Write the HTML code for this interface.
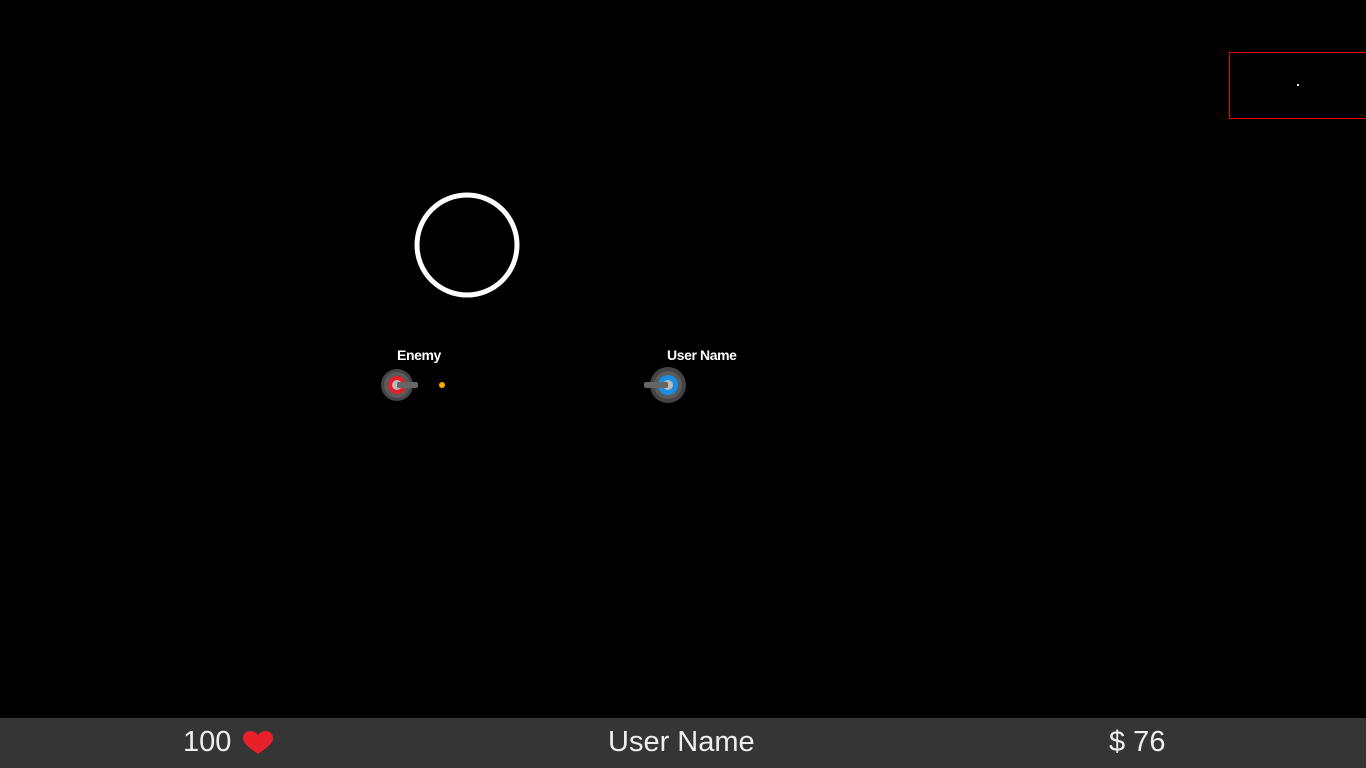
<!DOCTYPE html>
<html><head><style>
html,body{margin:0;width:1366px;height:768px;background:#000;overflow:hidden;font-family:"Liberation Sans",Arial,sans-serif}
.bar{position:absolute;left:0;top:718px;width:1366px;height:50px;background:#353535;color:#eee;font-size:29px}
.bar span{position:absolute;top:8px}
.lbl{position:absolute;color:#fff;font-size:14px;font-weight:bold;letter-spacing:-0.4px}
</style></head><body>
<div style="position:absolute;left:1229px;top:52px;width:140px;height:65px;border:1px solid #e00"></div>
<div style="position:absolute;left:1297px;top:84px;width:2px;height:2px;background:#fdd"></div>
<svg width="1366" height="718" style="position:absolute;left:0;top:0">
<circle cx="467" cy="245" r="50" fill="none" stroke="#fff" stroke-width="5"/>
<circle cx="397" cy="385" r="16" fill="#444"/>
<circle cx="397" cy="385" r="13" fill="#5a5a5a"/>
<circle cx="397" cy="385" r="9" fill="#e2202a"/>
<circle cx="397" cy="385" r="5" fill="#bbb"/>
<rect x="397" y="382" width="21" height="6" rx="2" fill="#666"/>
<circle cx="442" cy="385" r="3" fill="#fa0"/>
<circle cx="668" cy="385" r="18" fill="#444"/>
<circle cx="668" cy="385" r="14" fill="#5a5a5a"/>
<circle cx="668" cy="385" r="10" fill="#1a8ee0"/>
<circle cx="668" cy="385" r="5" fill="#bbb"/>
<rect x="644" y="382" width="24" height="6" rx="2" fill="#666"/>
</svg>
<div class="lbl" style="left:397px;top:347px">Enemy</div>
<div class="lbl" style="left:667px;top:347px">User Name</div>
<div class="bar">
<span style="left:183px">100</span>
<svg style="position:absolute;left:243px;top:13px" width="30" height="24" viewBox="0 0 30 24"><path d="M15 23 C5 16 0 12 0 7 C0 2 4 0 8 0 C11 0 13 2 15 4 C17 2 19 0 22 0 C26 0 30 2 30 7 C30 12 25 16 15 23Z" fill="#e8202a"/></svg>
<span style="left:608px">User Name</span>
<span style="left:1109px">$ 76</span>
</div>
</body></html>
